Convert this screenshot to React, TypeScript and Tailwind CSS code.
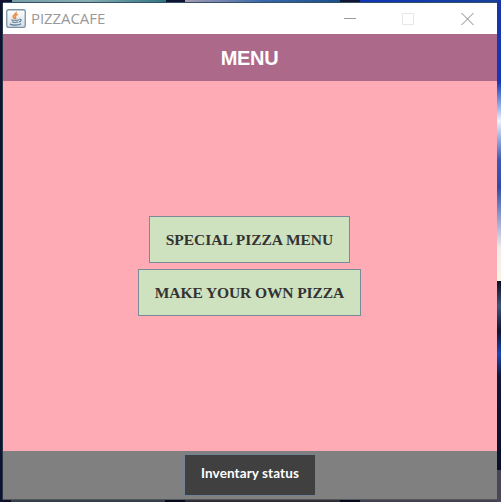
import React from "react";

function JavaIcon() {
  return (
    <svg width="20" height="20" viewBox="0 0 20 20" fill="none">
      <defs>
        <linearGradient id="tile" x1="0" y1="0" x2="0" y2="1">
          <stop offset="0" stopColor="#ffffff" />
          <stop offset="1" stopColor="#d5dce2" />
        </linearGradient>
      </defs>
      <rect x="0.75" y="0.75" width="18.5" height="17.7" rx="1.8" fill="url(#tile)" stroke="#7b92a6" strokeWidth="1.3" />
      <path d="M10.200 2.800c1 1.800-3.600 3-3 5 .2 1 1.500 1.500 1.700 2.200M11.800 5.300c-2 .8-3 1.500-2.300 2.700.5.800.4 1.200-.3 1.800" stroke="#ee8b38" strokeWidth="1.600" />
      <path d="M5.300 10.700c1.500.8 5.800.8 7.700 0M6 12.800c1.500.8 4.500.8 6.300 0M3.800 15c2.500 1.500 8.500 1.500 11.300-.2M13.200 10.300c2.800-.4 2.500 2.200-.2 2.700" stroke="#557b9b" strokeWidth="1.1" />
    </svg>
  );
}

function TitleBar() {
  return (
    <div className="flex h-[31px] items-center bg-white pl-[3px]">
      <JavaIcon />
      <span className="ml-[5px] pb-[2px] font-['Open_Sans',sans-serif] text-[15px] leading-5 tracking-[-0.08px] text-[#999]">PIZZACAFE</span>
      <div className="ml-auto flex items-center pr-[23px]">
        <svg className="mr-[46px]" width="12" height="12" viewBox="0 0 12 12" shapeRendering="crispEdges"><path d="M0 5.500h12" stroke="#999" /></svg>
        <svg className="mr-[47px]" width="12" height="12" viewBox="0 0 12 12" fill="none"><path d="M.5.5h11v11H.5z" stroke="#e6e6e6" /></svg>
        <svg width="13" height="12" viewBox="0 0 13 12"><path d="M.5 0l12 12M12.500 0l-12 12" stroke="#888" /></svg>
      </div>
    </div>
  );
}

function MenuButton({ label, size }: { label: string; size: string }) {
  return (
    <button className={`flex h-[47px] items-center justify-center whitespace-nowrap border border-[#7a8a99] bg-[#cfe2c0] pl-px font-['Liberation_Serif',serif] text-[15.5px] font-bold text-[#333] ${size}`}>
      {label}
    </button>
  );
}

export default function App() {
  return (
    <div className="flex h-[502px] w-[501px] overflow-hidden bg-[#10122e]">
      <div className="flex w-[3px] shrink-0 flex-col bg-[#111230]">
        <div className="ml-auto mt-[3px] h-[497px] w-px bg-[#253746]" />
      </div>
      <div className="flex w-[494px] shrink-0 flex-col">
        <div className="flex h-[3px] shrink-0 border-b border-[#35506a]">
          <div className="w-[9px] bg-[#111230]" />
          <div className="w-[154px] bg-linear-to-r from-[#789fa4] via-[#85aeb1] to-[#2c7480]" />
          <div className="w-[19px] bg-[#101331]" />
          <div className="w-[155px] bg-linear-to-r from-[#a79caf] via-[#3968aa] to-[#174f89]" />
          <div className="w-[20px] bg-[#101530]" />
          <div className="flex-1 bg-linear-to-r from-[#1034b5] to-[#17409c]" />
        </div>
        <TitleBar />
        <header className="flex h-[47px] items-center justify-center bg-[#ad6989] pr-px font-['Liberation_Sans',sans-serif] text-[20px] font-bold tracking-[-0.3px] text-white">MENU</header>
        <main className="flex h-[370px] flex-col items-center justify-center gap-[6px] bg-[#ffabb5] pr-[2px]">
          <MenuButton label="SPECIAL PIZZA MENU" size="w-[201px] tracking-[-0.03px]" />
          <MenuButton label="MAKE YOUR OWN PIZZA" size="w-[223px] tracking-[-0.09px]" />
        </main>
        <footer className="flex h-[48px] items-start justify-center bg-[#808080] pt-[3px]">
          <button className="h-[42px] w-[132px] whitespace-nowrap border border-[#708294] bg-[#404040] pb-[3px] font-['Lato',sans-serif] text-[13.5px] font-bold tracking-[0.1px] text-white">Inventary status</button>
        </footer>
        <div className="flex h-[3px] border-t border-[#515858]">
          <div className="w-[8px] bg-[#0d0e29]" />
          <div className="w-[154px] bg-[#353f4b]" />
          <div className="w-[20px] bg-[#08091f]" />
          <div className="w-[155px] bg-[#302d37]" />
          <div className="w-[20px] bg-[#08091f]" />
          <div className="flex-1 bg-[#454051]" />
        </div>
      </div>
      <div className="flex w-[4px] shrink-0 flex-col">
        <div className="h-[82px] bg-linear-to-b from-[#1835a5] to-[#1736b8]" />
        <div className="h-[78px] bg-linear-to-b from-[#1736b8] via-[#edf4fc] to-[#3c58b4]" />
        <div className="h-[55px] bg-linear-to-b from-[#3c58b4] via-[#304ba7] to-[#8799cc]" />
        <div className="h-[66px] bg-linear-to-b from-[#8799cc] via-[#f2ebe8] to-[#f8f4e2]" />
        <div className="h-[50px] bg-linear-to-b from-[#0a1122] via-[#40567e] to-[#0b1633]" />
        <div className="h-[46px] bg-linear-to-b from-[#0b1633] via-[#1749b8] to-[#0d1738]" />
        <div className="h-[93px] bg-linear-to-b from-[#0d1738] to-[#0a1028]" />
        <div className="flex-1 bg-[#484756]" />
      </div>
    </div>
  );
}
